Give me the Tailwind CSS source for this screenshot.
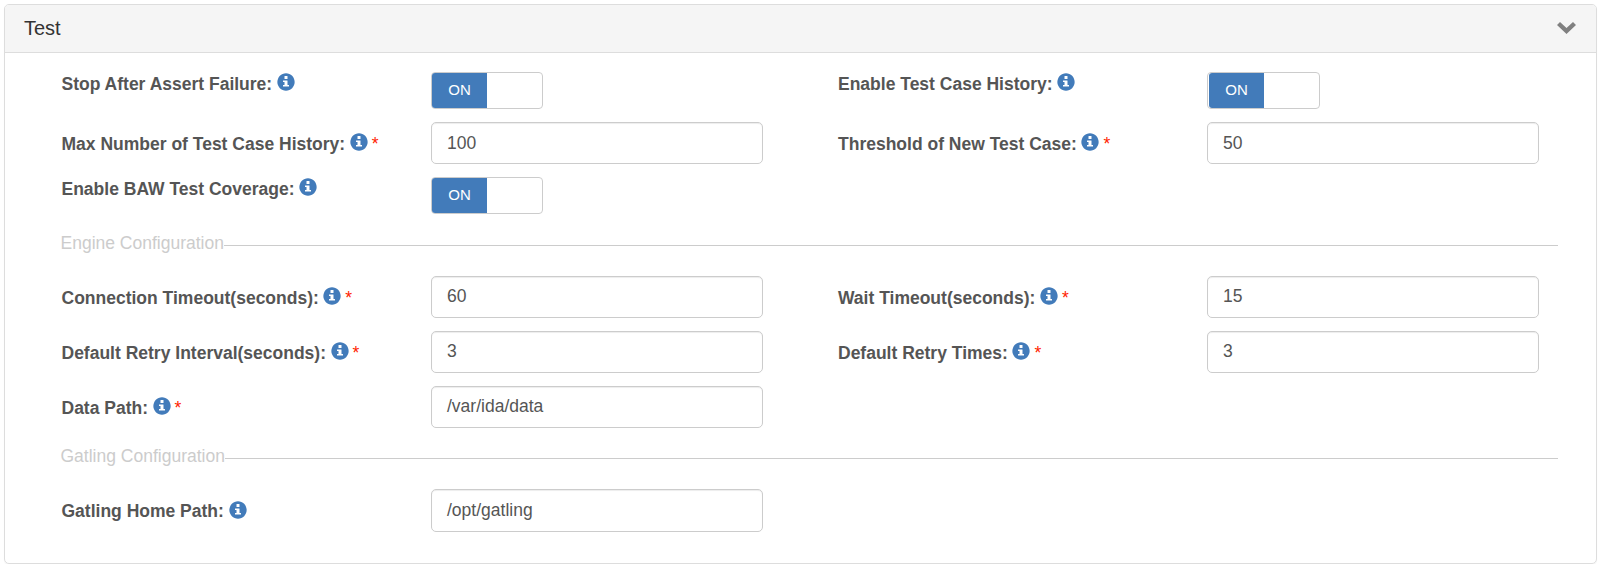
<!DOCTYPE html>
<html lang="en">
<head>
<meta charset="utf-8">
<title>Test</title>
<script src="https://cdn.jsdelivr.net/npm/@tailwindcss/browser@4"></script>
</head>
<body class="bg-white font-['Liberation_Sans',Arial,sans-serif] text-[17.5px] leading-[25px] text-[#555]">
<svg class="hidden">
  <symbol id="info" viewBox="0 0 1200 1200"><path transform="matrix(1 0 0 -1 0 1200)" d="M600 1177q117 0 224-45.5t184.5-123t123-184.5t45.5-224t-45.5-224t-123-184.5t-184.5-123t-224-45.5t-224 45.5t-184.5 123t-123 184.5t-45.5 224t45.5 224t123 184.5t184.5 123t224 45.5zM675 1000h-150q-10 0-17.5-7.5t-7.5-17.5v-150q0-10 7.5-17.5t17.5-7.5h150q10 0 17.5 7.5t7.5 17.5v150q0 10-7.5 17.5t-17.5 7.5zM675 700h-250q-10 0-17.5-7.5t-7.5-17.5v-50q0-10 7.5-17.5t17.5-7.5h75v-200h-75q-10 0-17.5-7.5t-7.5-17.5v-50q0-10 7.5-17.5t17.5-7.5h350q10 0 17.5 7.5t7.5 17.5v50q0 10-7.5 17.5t-17.5 7.5h-75v275q0 10-7.5 17.5t-17.5 7.5z"/></symbol>
</svg>
<div class="pt-1 pl-1">
<section class="w-[1593px] h-[560px] rounded-[5px] border border-[#ddd] shadow-[0_1px_1px_rgba(0,0,0,0.05)] overflow-hidden">
  <header class="flex h-12 items-start justify-between border-b border-[#ddd] bg-[#f5f5f5] pl-[19px] pr-5">
    <h2 class="pt-3 text-[20px] leading-[22px] text-[#333]">Test</h2>
    <svg class="h-3 w-[19px] mt-[17px]" viewBox="0 0 19 12" fill="#808080"><path d="M3 0 9.5 6 16 0 19 3 9.5 12 0 3Z"/></svg>
  </header>

  <div class="pl-[57px] pt-[19px]">
    <div class="grid grid-cols-[369px_407px_369px_332px] grid-rows-[50px_55px_37px]">
      <div class="-ml-[0.5px] flex items-start font-bold"><span>Stop After Assert Failure:</span><svg class="ml-[4.5px] mt-px size-[18px] fill-[#427bba]"><use href="#info"/></svg></div>
      <div><div class="flex h-[37px] w-28 overflow-hidden rounded-[4px] border border-[#ccc]"><span class="w-[55px] bg-[#427bba] pt-[4px] text-center text-[15px] text-white">ON</span></div></div>
      <div class="flex items-start font-bold"><span>Enable Test Case History:</span><svg class="ml-[4.5px] mt-px size-[18px] fill-[#427bba]"><use href="#info"/></svg></div>
      <div><div class="flex h-[37px] w-[113px] overflow-hidden rounded-[4px] border border-[#ccc] pl-px"><span class="w-[55px] rounded-l-[3px] bg-[#427bba] pt-[4px] text-center text-[15px] text-white">ON</span></div></div>

      <div class="-ml-[0.5px] flex items-start pt-[10px] font-bold"><span>Max Number of Test Case History:</span><svg class="ml-[4.5px] mt-px size-[18px] fill-[#427bba]"><use href="#info"/></svg><span class="ml-1 font-normal text-[#f20]">*</span></div>
      <div class="h-[42px] w-[332px] rounded-[5px] border border-[#ccc] pl-[15px] pt-[8px] shadow-[inset_0_1px_1px_rgba(0,0,0,0.075)]">100</div>
      <div class="flex items-start pt-[10px] font-bold"><span>Threshold of New Test Case:</span><svg class="ml-[4.5px] mt-px size-[18px] fill-[#427bba]"><use href="#info"/></svg><span class="ml-1 font-normal text-[#f20]">*</span></div>
      <div class="h-[42px] w-[332px] rounded-[5px] border border-[#ccc] pl-[15px] pt-[8px] shadow-[inset_0_1px_1px_rgba(0,0,0,0.075)]">50</div>

      <div class="-ml-[0.5px] flex items-start font-bold"><span>Enable BAW Test Coverage:</span><svg class="ml-[4.5px] mt-px size-[18px] fill-[#427bba]"><use href="#info"/></svg></div>
      <div><div class="flex h-[37px] w-28 overflow-hidden rounded-[4px] border border-[#ccc]"><span class="w-[55px] bg-[#427bba] pt-[4px] text-center text-[15px] text-white">ON</span></div></div>
    </div>

    <div class="-ml-[1.5px] mt-[17px] flex h-[25px] w-[1497.5px] text-[#ccc]"><span>Engine Configuration</span><span class="mt-[14px] h-px grow bg-[#ccc]"></span></div>

    <div class="mt-5 grid grid-cols-[369px_407px_369px_332px] grid-rows-[55px_55px_42px]">
      <div class="-ml-[0.5px] flex items-start pt-[10px] font-bold"><span>Connection Timeout(seconds):</span><svg class="ml-[4.5px] mt-px size-[18px] fill-[#427bba]"><use href="#info"/></svg><span class="ml-1 font-normal text-[#f20]">*</span></div>
      <div class="h-[42px] w-[332px] rounded-[5px] border border-[#ccc] pl-[15px] pt-[7px] shadow-[inset_0_1px_1px_rgba(0,0,0,0.075)]">60</div>
      <div class="flex items-start pt-[10px] font-bold"><span>Wait Timeout(seconds):</span><svg class="ml-[4.5px] mt-px size-[18px] fill-[#427bba]"><use href="#info"/></svg><span class="ml-1 font-normal text-[#f20]">*</span></div>
      <div class="h-[42px] w-[332px] rounded-[5px] border border-[#ccc] pl-[15px] pt-[7px] shadow-[inset_0_1px_1px_rgba(0,0,0,0.075)]">15</div>

      <div class="-ml-[0.5px] flex items-start pt-[10px] font-bold"><span>Default Retry Interval(seconds):</span><svg class="ml-[4.5px] mt-px size-[18px] fill-[#427bba]"><use href="#info"/></svg><span class="ml-1 font-normal text-[#f20]">*</span></div>
      <div class="h-[42px] w-[332px] rounded-[5px] border border-[#ccc] pl-[15px] pt-[7px] shadow-[inset_0_1px_1px_rgba(0,0,0,0.075)]">3</div>
      <div class="flex items-start pt-[10px] font-bold"><span>Default Retry Times:</span><svg class="ml-[4.5px] mt-px size-[18px] fill-[#427bba]"><use href="#info"/></svg><span class="ml-1 font-normal text-[#f20]">*</span></div>
      <div class="h-[42px] w-[332px] rounded-[5px] border border-[#ccc] pl-[15px] pt-[7px] shadow-[inset_0_1px_1px_rgba(0,0,0,0.075)]">3</div>

      <div class="-ml-[0.5px] flex items-start pt-[10px] font-bold"><span>Data Path:</span><svg class="ml-[4.5px] mt-px size-[18px] fill-[#427bba]"><use href="#info"/></svg><span class="ml-1 font-normal text-[#f20]">*</span></div>
      <div class="h-[42px] w-[332px] rounded-[5px] border border-[#ccc] pl-[15px] pt-[7px] shadow-[inset_0_1px_1px_rgba(0,0,0,0.075)]">/var/ida/data</div>
    </div>

    <div class="-ml-[1.5px] mt-4 flex h-[25px] w-[1497.5px] text-[#ccc]"><span>Gatling Configuration</span><span class="mt-[14px] h-px grow bg-[#ccc]"></span></div>

    <div class="mt-5 grid grid-cols-[369px_407px]">
      <div class="-ml-[0.5px] flex items-start pt-[10px] font-bold"><span>Gatling Home Path:</span><svg class="ml-[5px] mt-0.5 size-[18px] fill-[#427bba]"><use href="#info"/></svg></div>
      <div class="h-[43px] w-[332px] rounded-[5px] border border-[#ccc] pl-[15px] pt-[8px] shadow-[inset_0_1px_1px_rgba(0,0,0,0.075)]">/opt/gatling</div>
    </div>
  </div>
</section>
</div>
</body>
</html>
